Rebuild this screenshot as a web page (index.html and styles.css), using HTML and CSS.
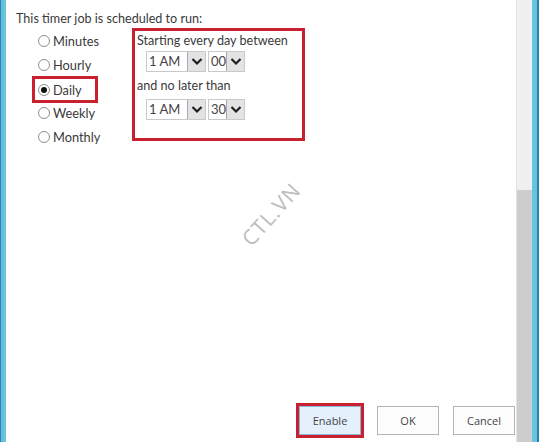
FILE: index.html
```html
<!DOCTYPE html>
<html>
<head>
<meta charset="utf-8">
<link rel="stylesheet" href="styles.css">
</head>
<body>
<div class="frame">
  <div class="edge edge-left"></div>
  <div class="content">
    <div class="heading">This timer job is scheduled to run:</div>
    <div class="schedule">
      <div class="options">
        <label class="opt"><span class="radio"></span>Minutes</label>
        <label class="opt"><span class="radio"></span>Hourly</label>
        <label class="opt marked"><span class="radio checked"></span>Daily</label>
        <label class="opt"><span class="radio"></span>Weekly</label>
        <label class="opt"><span class="radio"></span>Monthly</label>
      </div>
      <div class="window">
        <div class="caption">Starting every day between</div>
        <div class="selects">
          <div class="select wide"><span class="val">1 AM</span><span class="arrow"><svg width="12" height="9" viewBox="0 0 12 9"><path d="M1.5 2 L6 6.5 L10.5 2" fill="none" stroke="#1e1e1e" stroke-width="2.2"/></svg></span></div>
          <div class="select narrow"><span class="val">00</span><span class="arrow"><svg width="12" height="9" viewBox="0 0 12 9"><path d="M1.5 2 L6 6.5 L10.5 2" fill="none" stroke="#1e1e1e" stroke-width="2.2"/></svg></span></div>
        </div>
        <div class="caption second">and no later than</div>
        <div class="selects">
          <div class="select wide"><span class="val">1 AM</span><span class="arrow"><svg width="12" height="9" viewBox="0 0 12 9"><path d="M1.5 2 L6 6.5 L10.5 2" fill="none" stroke="#1e1e1e" stroke-width="2.2"/></svg></span></div>
          <div class="select narrow"><span class="val">30</span><span class="arrow"><svg width="12" height="9" viewBox="0 0 12 9"><path d="M1.5 2 L6 6.5 L10.5 2" fill="none" stroke="#1e1e1e" stroke-width="2.2"/></svg></span></div>
        </div>
      </div>
    </div>
    <div class="buttons">
      <button class="btn enable">Enable</button>
      <button class="btn ok">OK</button>
      <button class="btn cancel">Cancel</button>
    </div>
    <div class="watermark">CTL.VN</div>
  </div>
  <div class="scrollbar"><div class="track"></div><div class="thumb"></div></div>
  <div class="edge edge-right"></div>
</div>
</body>
</html>
```
FILE: styles.css
```css
html, body {
  margin: 0;
  padding: 0;
  background: #ffffff;
}
body {
  font-family: "Lato", "Open Sans", sans-serif;
  color: #3a3a3a;
}
.frame {
  display: flex;
  width: 539px;
  height: 442px;
  overflow: hidden;
}
.edge {
  flex: 0 0 auto;
}
.edge-left {
  width: 6px;
  background: linear-gradient(to right, #2f86ad 0, #2f86ad 1px, #5fbedb 1px, #6cc6e0 100%);
  margin-right: 1px;
}
.edge-right {
  width: 7px;
  background: linear-gradient(to right, #6cc6e0 0, #64c0dc 5px, #2f86ad 5px, #2a7ca3 100%);
}
.content {
  position: relative;
  flex: 1 1 auto;
  display: flex;
  flex-direction: column;
  padding: 10px 1px 7px 9px;
}
.heading {
  font-size: 12.6px;
  line-height: 18px;
  height: 18px;
}
.schedule {
  display: flex;
  padding-left: 22px;
}
.options {
  width: 94px;
  padding-top: 1px;
  display: flex;
  flex-direction: column;
  align-items: flex-start;
}
.opt {
  display: flex;
  align-items: center;
  height: 24px;
  font-size: 12.8px;
}
.opt.marked {
  height: 21px;
  margin: 2px 0 1px -3px;
  padding: 0 13px 0 3px;
  outline: 3px solid #c8202f;
}
.radio {
  width: 12px;
  height: 12px;
  border: 1px solid #8e8e8e;
  border-radius: 50%;
  margin-right: 3px;
  box-sizing: border-box;
  display: flex;
  align-items: center;
  justify-content: center;
  background: #fff;
}
.radio.checked::after {
  content: "";
  width: 6px;
  height: 6px;
  border-radius: 50%;
  background: #111;
}
.window {
  width: 173px;
  height: 113px;
  box-sizing: border-box;
  border: 3px solid #c8202f;
  padding: 1px 0 0 2px;
}
.caption {
  font-size: 12.6px;
  line-height: 18px;
}
.caption.second {
  margin-top: 5px;
}
.selects {
  display: flex;
  gap: 2px;
  margin: 1px 0 0 9px;
}
.caption.second + .selects {
  margin-top: 4px;
}
.select {
  display: flex;
  height: 21px;
  box-sizing: border-box;
  border: 1px solid #c9c9c9;
  background: #fff;
  font-size: 13px;
  line-height: 19px;
}
.select.wide { width: 60px; }
.select.narrow { width: 37px; }
.val {
  flex: 1 1 auto;
  padding-left: 2px;
  color: #444;
}
.arrow {
  width: 18px;
  box-sizing: border-box;
  background: #e3e3e3;
  border-left: 1px solid #a9a9a9;
  display: flex;
  align-items: center;
  justify-content: center;
}
.buttons {
  margin-top: auto;
  display: flex;
  justify-content: flex-end;
}
.btn {
  width: 62px;
  height: 29px;
  box-sizing: border-box;
  border: 1px solid #b4b4b4;
  background: #fdfdfd;
  font-family: "Open Sans", "Noto Sans", sans-serif;
  font-size: 11px;
  color: #444;
  padding: 0;
}
.btn.enable {
  background: #e4f0fb;
  border-color: #8fb6d8;
  outline: 3px solid #c8202f;
}
.btn.ok { margin-left: 16px; }
.btn.cancel { margin-left: 14px; }
.watermark {
  position: absolute;
  left: 226px;
  top: 200px;
  font-family: "Open Sans", sans-serif;
  font-size: 21px;
  letter-spacing: 1px;
  color: #bdbdbd;
  transform: rotate(-48deg);
}
.scrollbar {
  width: 15px;
  display: flex;
  flex-direction: column;
  border-left: 1px solid #e4e4e4;
}
.track {
  height: 190px;
  background: #f0f0f0;
}
.thumb {
  flex: 1 1 auto;
  background: #cdcdcd;
}
```
